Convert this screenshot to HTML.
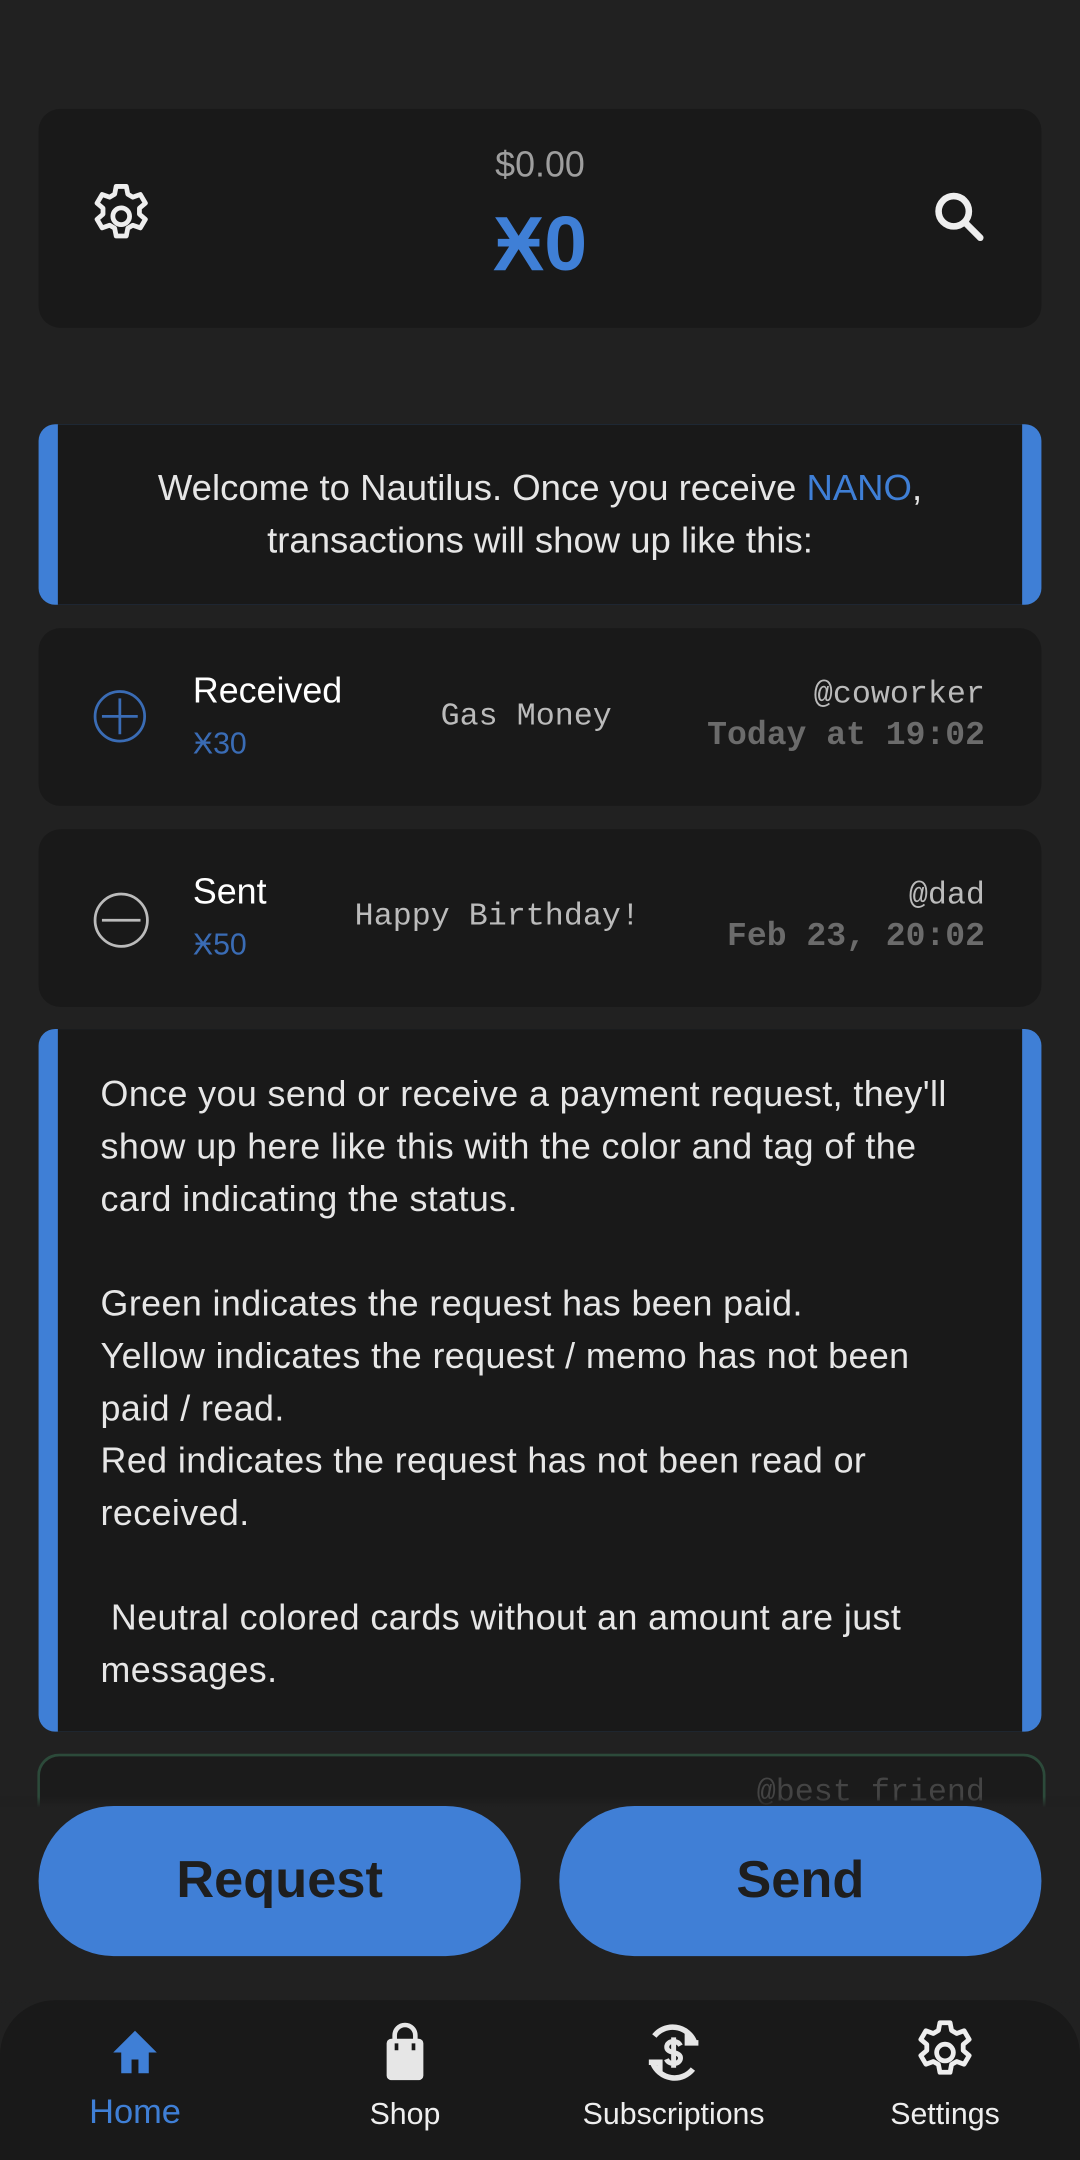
<!DOCTYPE html>
<html><head><meta charset="utf-8"><style>
html,body{margin:0;padding:0;background:#212121;width:1080px;height:2160px;overflow:hidden}
#w{position:absolute;left:0;top:0;width:784px;height:1568px;transform:scale(1.377551);transform-origin:0 0;font-family:"Liberation Sans",sans-serif;color:#e6e6e6}
.a{position:absolute}
.card{position:absolute;left:28px;width:728px;background:#191919;border-radius:16px}
.bar{position:absolute;left:28px;width:728px;background:#3f7fd6;border-radius:12px}
.bar .in{position:absolute;left:14px;right:14px;top:0;bottom:0;background:#191919}
.mono{font-family:"Liberation Mono",monospace}
.btn{position:absolute;top:1311px;height:109px;width:350px;background:#407fd6;border-radius:55px;color:#1e1e1e;font-weight:bold;font-size:38px;text-align:center;line-height:109px}
.nl{position:absolute;top:1522px;font-size:22px;width:180px;text-align:center;color:#eee}
</style></head><body><div id="w">
<div class="card" style="top:79px;height:159px"></div>
<svg class="a" style="left:62px;top:131px" width="52" height="52" viewBox="0 0 24 24" fill="none" stroke="#eee" stroke-width="1.6" stroke-linejoin="round"><path d="M10.3 2h3.4l.5 2.6 1.7 1 2.5-.9 1.7 2.9-2 1.7v2l2 1.7-1.7 2.9-2.5-.9-1.7 1-.5 2.6h-3.4l-.5-2.6-1.7-1-2.5.9-1.7-2.9 2-1.7v-2l-2-1.7 1.7-2.9 2.5.9 1.7-1z"/><circle cx="12" cy="12" r="2.8"/></svg>
<div class="a" style="left:292px;top:104px;width:200px;text-align:center;font-size:26px;color:#9e9e9e">$0.00</div>
<div class="a" style="left:292px;top:144px;width:200px;text-align:center;font-size:56px;font-weight:bold;color:#3f7fd6">Ӿ0</div>
<svg class="a" style="left:674px;top:135px" width="44" height="44" viewBox="0 0 24 24" fill="none" stroke="#eee" stroke-width="2.6" stroke-linecap="round"><circle cx="10" cy="10" r="6"/><path d="M14.5 14.5l6 6"/></svg>

<div class="bar" style="top:308px;height:131px"><div class="in"></div></div>
<div class="a" style="left:42px;top:335px;width:700px;text-align:center;font-size:26.5px;line-height:38px;color:#e6e6e6">Welcome to Nautilus. Once you receive <span style="color:#3f7fd6">NANO</span>,<br>transactions will show up like this:</div>

<div class="card" style="top:456px;height:129px"></div>
<svg class="a" style="left:67px;top:500px" width="40" height="40" viewBox="0 0 40 40" fill="none" stroke="#3a6cb5" stroke-width="2"><circle cx="20" cy="20" r="18"/><path d="M20 7v26M7 20h26"/></svg>
<div class="a" style="left:140px;top:486px;font-size:26px;color:#fff">Received</div>
<div class="a" style="left:140px;top:527px;font-size:22px;color:#3a6cb5">Ӿ30</div>
<div class="a mono" style="left:282px;top:507px;width:200px;text-align:center;font-size:23px;color:#bbb">Gas Money</div>
<div class="a mono" style="right:69px;top:491px;font-size:23px;color:#bbb;text-align:right">@coworker</div>
<div class="a mono" style="right:69px;top:521px;font-size:24px;font-weight:bold;color:#6b6b6b;text-align:right">Today at 19:02</div>

<div class="card" style="top:602px;height:129px"></div>
<svg class="a" style="left:67px;top:647px" width="42" height="42" viewBox="0 0 42 42" fill="none" stroke="#bbb" stroke-width="2"><circle cx="21" cy="21" r="19"/><path d="M7 21h28"/></svg>
<div class="a" style="left:140px;top:632px;font-size:26px;color:#fff">Sent</div>
<div class="a" style="left:140px;top:673px;font-size:22px;color:#3a6cb5">Ӿ50</div>
<div class="a mono" style="left:221px;top:652px;width:280px;text-align:center;font-size:23px;color:#bbb">Happy Birthday!</div>
<div class="a mono" style="right:69px;top:637px;font-size:23px;color:#bbb;text-align:right">@dad</div>
<div class="a mono" style="right:69px;top:667px;font-size:24px;font-weight:bold;color:#6b6b6b;text-align:right">Feb 23, 20:02</div>

<div class="bar" style="top:747px;height:510px"><div class="in"></div></div>
<div class="a" style="left:73px;top:775px;white-space:nowrap;font-size:26px;letter-spacing:0.3px;line-height:38px;color:#e6e6e6">Once you send or receive a payment request, they'll<br>show up here like this with the color and tag of the<br>card indicating the status.<br><br>Green indicates the request has been paid.<br>Yellow indicates the request / memo has not been<br>paid / read.<br>Red indicates the request has not been read or<br>received.<br><br>&nbsp;Neutral colored cards without an amount are just<br>messages.</div>

<div class="a" style="left:27px;top:1273px;width:728px;height:60px;border:2px solid #2c4a3a;border-bottom:none;border-radius:16px 16px 0 0;background:#1b1b1b"></div>
<div class="a mono" style="right:69px;top:1288px;font-size:23px;color:#444">@best friend</div>
<div class="a" style="left:0;top:1304px;width:784px;height:150px;background:linear-gradient(#21212100,#212121 8px)"></div>

<div class="btn" style="left:28px">Request</div>
<div class="btn" style="left:406px">Send</div>

<div class="a" style="left:0;top:1452px;width:784px;height:116px;background:#191919;border-radius:40px 40px 0 0"></div>
<svg class="a" style="left:78px;top:1470px" width="40" height="40" viewBox="0 0 24 24"><path d="M12 2.5L2.5 12H6v9h4.5v-6h3v6H18v-9h3.5z" fill="#3f7fd6"/></svg>
<svg class="a" style="left:274px;top:1468px" width="40" height="44" viewBox="0 0 24 26"><path d="M7.5 8V5.5a4.5 4.5 0 0 1 9 0V8" stroke="#e6e6e6" stroke-width="2" fill="none"/><rect x="4" y="7" width="16" height="18" rx="2" fill="#e6e6e6"/><rect x="7.5" y="9" width="1.6" height="3" fill="#191919"/><rect x="14.9" y="9" width="1.6" height="3" fill="#191919"/></svg>
<svg class="a" style="left:465px;top:1466px" width="48" height="48" viewBox="0 0 24 24" fill="none" stroke="#e6e6e6" stroke-width="2"><path d="M19.5 8A8.5 8.5 0 0 0 5 6"/><path d="M4.5 16A8.5 8.5 0 0 0 19 18"/><path d="M17 4.5v4h4" fill="#e6e6e6"/><path d="M7 19.5v-4H3"/><path d="M14.5 9.5c-.5-1-1.5-1.5-2.5-1.5-1.5 0-2.5.8-2.5 2s1 1.7 2.5 2 2.5.9 2.5 2-1 2-2.5 2c-1.2 0-2.2-.6-2.6-1.6M12 6.5v11" stroke-width="1.8"/></svg>
<svg class="a" style="left:660px;top:1464px" width="52" height="52" viewBox="0 0 24 24" fill="none" stroke="#eee" stroke-width="1.6" stroke-linejoin="round"><path d="M10.3 2h3.4l.5 2.6 1.7 1 2.5-.9 1.7 2.9-2 1.7v2l2 1.7-1.7 2.9-2.5-.9-1.7 1-.5 2.6h-3.4l-.5-2.6-1.7-1-2.5.9-1.7-2.9 2-1.7v-2l-2-1.7 1.7-2.9 2.5.9 1.7-1z"/><circle cx="12" cy="12" r="2.8"/></svg>
<div class="nl" style="left:8px;top:1519px;color:#3f7fd6;font-size:25px">Home</div>
<div class="nl" style="left:204px">Shop</div>
<div class="nl" style="left:399px">Subscriptions</div>
<div class="nl" style="left:596px">Settings</div>
</div></body></html>
